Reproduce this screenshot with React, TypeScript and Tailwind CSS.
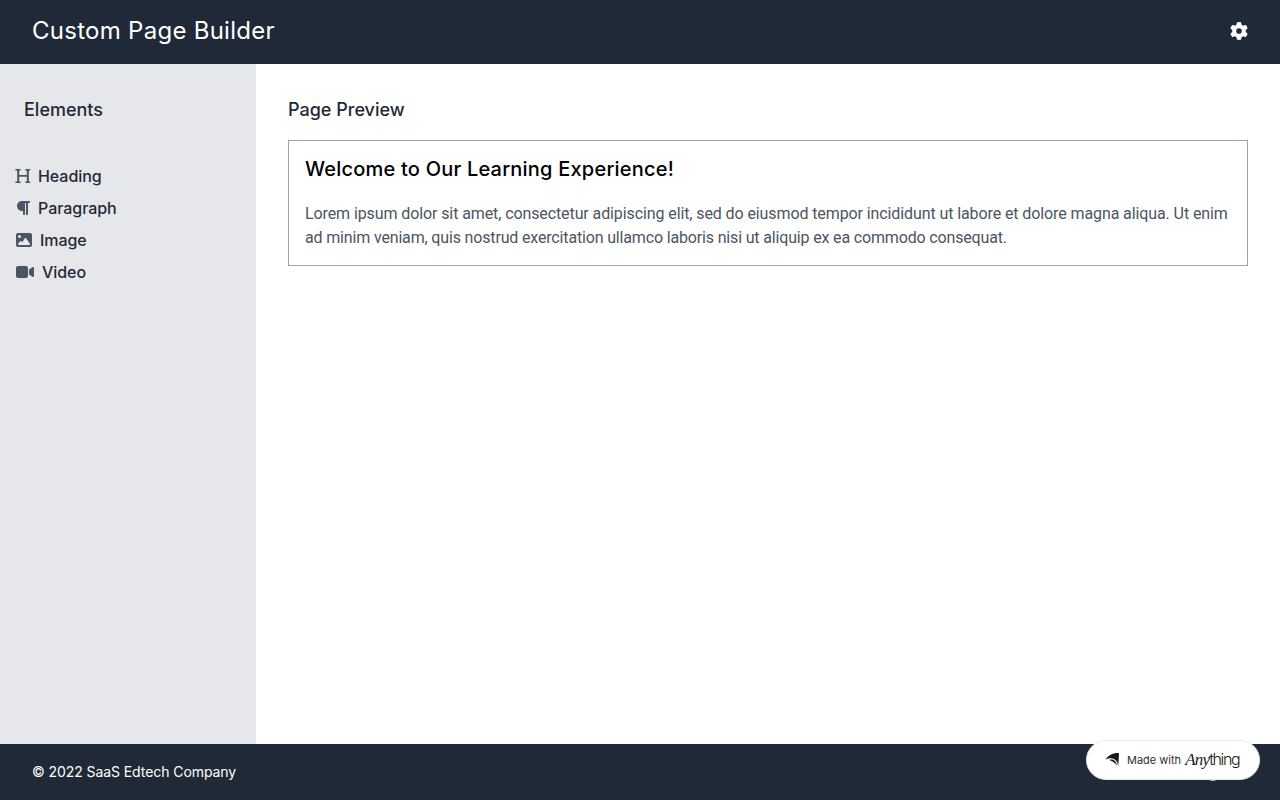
import { FaDribbble, FaGear, FaImage, FaParagraph, FaVideo } from "react-icons/fa6";

// Slab-serif H, a little wider than its 14px slot
function HeadingIcon({ className }: { className?: string }) {
  return (
    <svg viewBox="0 0 14 16" fill="currentColor" overflow="visible" className={className}>
      <path d="M-.6 1H4.600V2.600H3.200V7H10.800V2.600H9.400V1H14.200V2.600H12.800V13.400H14.200V15H9.400V13.400H10.800V8.700H3.200V13.400H4.600V15H-.6V13.400H1.200V2.600H-.6Z" />
    </svg>
  );
}

const ELEMENTS = [
  { label: "Heading", icon: HeadingIcon, width: "w-[14px]" },
  { label: "Paragraph", icon: FaParagraph, width: "w-[14px]" },
  { label: "Image", icon: FaImage, width: "w-[16px]" },
  { label: "Video", icon: FaVideo, width: "w-[18px]" },
];

function Badge() {
  return (
    <a
      href="#"
      className="fixed right-5 bottom-5 flex h-10 w-[174px] items-center rounded-full border border-[#e5e7eb] bg-white pl-[18px] text-[#18181b]"
    >
      <svg width="15" height="16" viewBox="0 0 15 16" fill="currentColor" className="shrink-0">
        <path d="M.3 7.600C3.500 3.500 7 1 13.200 1Q14 1 14 2L13.200 15C13 8.200 8.500 3.800 .3 7.600Z" />
        <path d="M4.200 8C8.200 6.400 11.600 9.400 11.900 13.600C10 10.900 7.800 9 4.200 8Z" />
      </svg>
      <span className="ml-[7px] font-['Inter',sans-serif] text-[11px] whitespace-nowrap text-[#2f2f35]">
        Made with
      </span>
      <span className="ml-[4px] flex items-baseline whitespace-nowrap">
        <span className="font-['Liberation_Serif',serif] text-[17px] italic tracking-[-0.8px]">Any</span>
        <span className="font-['Inter',sans-serif] text-[16px] font-light tracking-[-1.4px]">thing</span>
      </span>
    </a>
  );
}

export default function App() {
  return (
    <div className="flex h-screen flex-col bg-white font-['Inter',sans-serif]">
      <header className="flex h-16 items-center justify-between bg-[#1f2937] px-8 pb-[3px] text-white">
        <h1 className="text-2xl font-normal tracking-[0.27px]">Custom Page Builder</h1>
        <button type="button" aria-label="Settings">
          <FaGear className="mr-[0.5px] size-[18px]" />
        </button>
      </header>

      <div className="flex flex-1">
        <aside className="w-64 shrink-0 bg-[#e5e7eb] px-4 pt-8 text-[#1f2937]">
          <h2 className="pl-2 text-lg leading-7 font-medium">Elements</h2>
          <ul className="mt-10 space-y-2">
            {ELEMENTS.map(({ label, icon: Icon, width }) => (
              <li key={label} className="flex items-center">
                <Icon className={`mr-2 h-4 text-[#4b5563] ${width}`} />
                <span className="font-medium tracking-[-0.05px]">{label}</span>
              </li>
            ))}
          </ul>
        </aside>

        <main className="min-w-0 flex-1 px-8 pt-8">
          <h2 className="text-lg leading-7 font-medium text-[#1f2937]">Page Preview</h2>
          <div className="mt-4 border border-[#9ca3af] px-4 pt-[14px] pb-[15px]">
            <h3 className="text-xl leading-7 font-medium tracking-[0.21px] whitespace-nowrap text-black">
              Welcome to Our Learning Experience!
            </h3>
            <p className="mt-[19px] font-['Roboto',sans-serif] leading-6 whitespace-nowrap text-[#4b5563]">
              <span className="block tracking-[-0.1px]">
                Lorem ipsum dolor sit amet, consectetur adipiscing elit, sed do eiusmod tempor incididunt ut labore et dolore magna aliqua. Ut enim
              </span>
              <span className="block tracking-[-0.16px]">
                ad minim veniam, quis nostrud exercitation ullamco laboris nisi ut aliquip ex ea commodo consequat.
              </span>
            </p>
          </div>
        </main>
      </div>

      <footer className="flex h-14 items-center justify-between bg-[#1f2937] px-8 text-sm text-white">
        <p className="tracking-[-0.08px]">© 2022 SaaS Edtech Company</p>
        <FaDribbble className="mt-px mr-[27px] size-4" />
      </footer>

      <Badge />
    </div>
  );
}
